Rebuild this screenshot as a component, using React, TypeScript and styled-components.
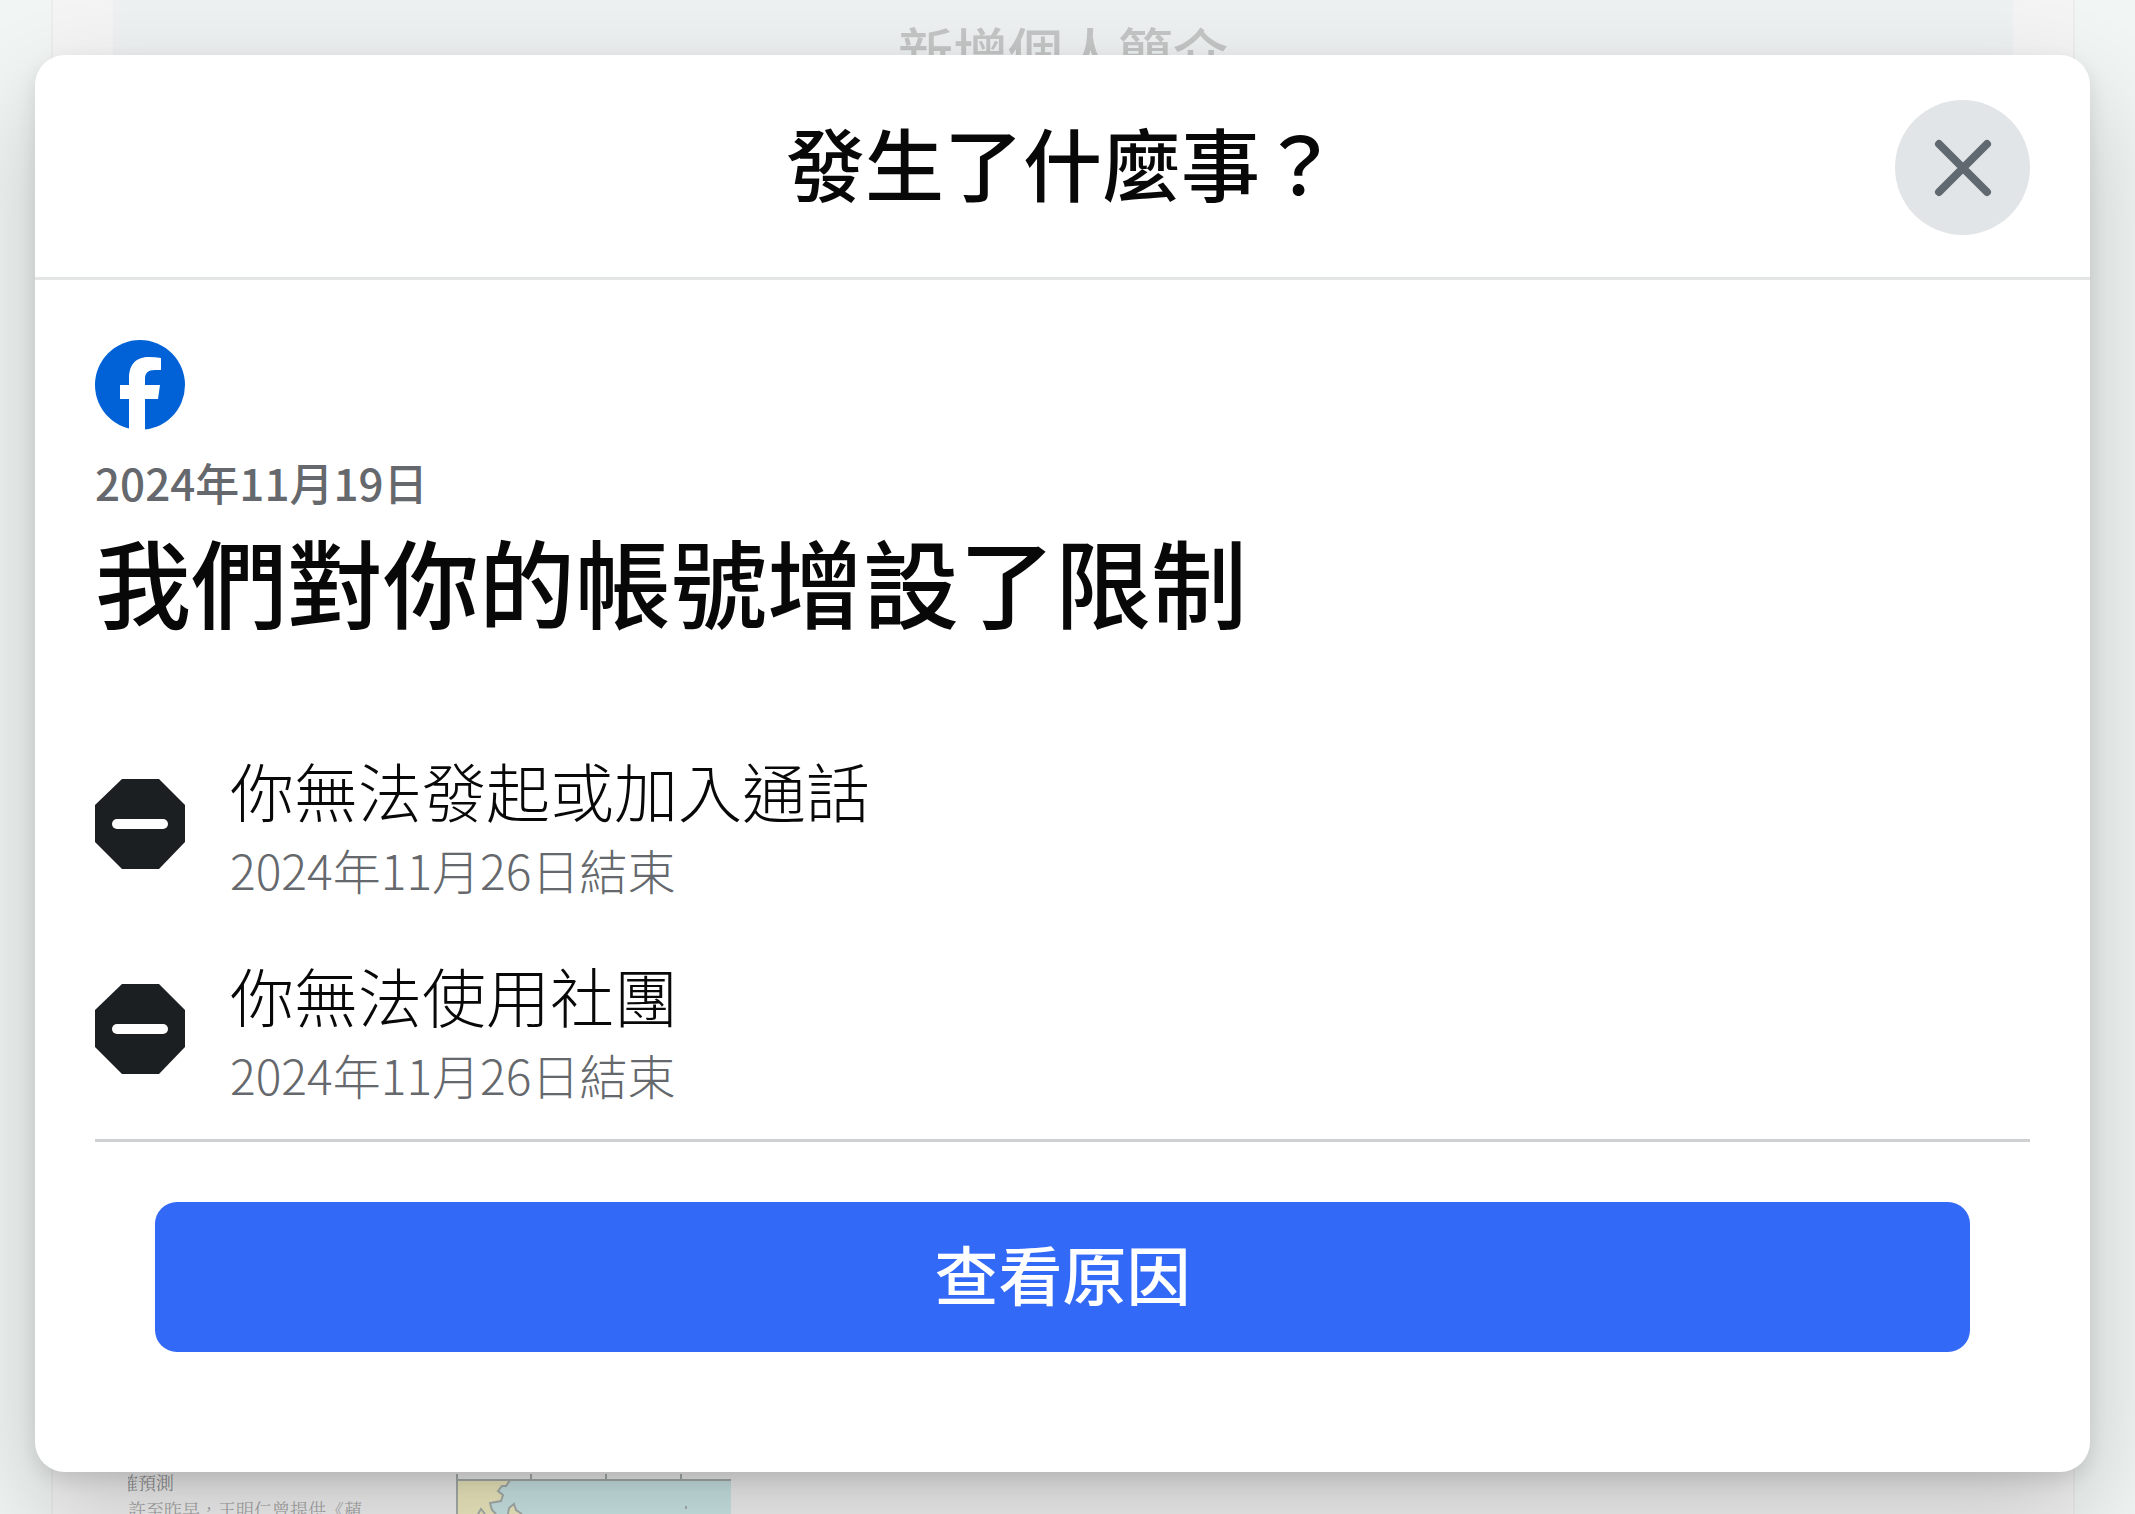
import React from 'react';
import styled, { createGlobalStyle } from 'styled-components';

const GlobalStyle = createGlobalStyle`
  *, *::before, *::after { box-sizing: border-box; }
  html, body, #root { height: 100%; }
  body {
    margin: 0;
    overflow: hidden;
    background: #f1f6f4;
    color: #080809;
    font-family: "Noto Sans CJK TC", "Noto Sans", sans-serif;
  }
  h1, h2, p, ul { margin: 0; padding: 0; }
`;

const Screen = styled.div`
  position: relative;
  height: 100%;
  overflow: hidden;
`;

const Backdrop = styled.div`
  height: 100%;
  margin: 0 60px 0 51px;
  padding: 0 60px;
  display: flex;
  flex-direction: column;
  justify-content: space-between;
  background: #f4f4f4;
  border: solid #ececec;
  border-width: 0 2px;
`;

const BioButton = styled.button`
  height: 110px;
  padding: 0 0 10px;
  border: 0;
  background: #edf1f1;
  color: #c4c6c6;
  font: 500 55px/80px "Noto Sans CJK TC", sans-serif;
`;

const Post = styled.article`
  display: flex;
  gap: 10px;
  height: 48px;
  padding-left: 15px;
`;

const Snippet = styled.div`
  width: 318px;
  height: 48px;
  padding-top: 3px;
  overflow: hidden;
  white-space: nowrap;
  font: 300 18px/27px "Noto Serif CJK TC", "Noto Sans CJK TC", serif;
  color: #a2a2a2;
`;

const SnippetLead = styled.p`
  text-indent: -8px;
  color: #8c8c8c;
`;

const MapArt = styled.svg`
  display: block;
  width: 286px;
  height: 48px;
`;

const Layer = styled.div`
  position: absolute;
  inset: 0;
  padding: 55px 45px 42px 35px;
`;

const Dialog = styled.section`
  height: 100%;
  display: flex;
  flex-direction: column;
  border-radius: 30px;
  background: #fff;
  box-shadow: 0 45px 105px rgba(0, 0, 0, 0.2), 0 8px 19px rgba(0, 0, 0, 0.1);
`;

const Header = styled.header`
  display: grid;
  grid-template-columns: 135px 1fr 135px;
  padding: 45px 60px 42px;
  border-bottom: 3px solid #e4e5e5;
`;

const Title = styled.h1`
  grid-column: 2;
  text-align: center;
  font-size: 79px;
  line-height: 124px;
  font-weight: 500;
`;

const CloseButton = styled.button`
  display: grid;
  place-items: center;
  width: 135px;
  height: 135px;
  padding: 0;
  border: 0;
  border-radius: 50%;
  background: #e2e5e7;
  color: #606970;
  cursor: pointer;
`;

const Content = styled.div`
  padding: 60px 60px 0;
`;

const Logo = styled.svg`
  display: block;
  width: 90px;
  height: 90px;
`;

const NoticeDate = styled.p`
  margin-top: 22px;
  font-size: 44px;
  line-height: 60px;
  font-weight: 500;
  color: #65686c;
`;

const Heading = styled.h2`
  margin-top: 8px;
  font-size: 96px;
  line-height: 120px;
  font-weight: 500;
`;

const Limits = styled.ul`
  display: grid;
  gap: 45px;
  margin-top: 104px;
  padding-bottom: 30px;
  border-bottom: 3px solid #ced0d2;
  list-style: none;
`;

const Limit = styled.li`
  display: flex;
  align-items: center;
  gap: 45px;
`;

const LimitTitle = styled.p`
  font-size: 64px;
  line-height: 90px;
  font-weight: 300;
`;

const LimitEnd = styled.p`
  font-size: 48px;
  line-height: 70px;
  font-weight: 300;
  color: #65686c;
`;

const Footer = styled.footer`
  display: flex;
  padding: 60px 120px;
`;

const PrimaryButton = styled.button`
  flex: 1;
  height: 150px;
  padding: 0 0 10px;
  border: 0;
  border-radius: 22px;
  background: #3369f7;
  color: #fff;
  font: 500 64px/90px "Noto Sans CJK TC", sans-serif;
  cursor: pointer;
`;

const limits = [
  { title: '你無法發起或加入通話', end: '2024年11月26日結束' },
  { title: '你無法使用社團', end: '2024年11月26日結束' },
];

const StopIcon = () => (
  <svg width="90" height="90" viewBox="0 0 90 90" aria-hidden="true">
    <path d="M27 0H64L90 26V63L64 90H27L0 63V26Z" fill="#1c1f21" />
    <rect x="17" y="40" width="56" height="10" rx="5" fill="#fff" />
  </svg>
);

export default function App() {
  return (
    <Screen>
      <GlobalStyle />
      <Backdrop aria-hidden="true">
        <BioButton tabIndex={-1}>新增個人簡介</BioButton>
        <Post>
          <Snippet>
            <SnippetLead>確預測</SnippetLead>
            <p>許至昨早，王明仁曾提供《蘋</p>
          </Snippet>
          <MapArt viewBox="0 0 286 48">
            <rect y="14" width="275" height="34" fill="#cfeaea" />
            <path d="M0 14H54L50 20 46 20 42 25 47 29 45 35 34 37 36 44 40 48H0Z" fill="#f3efc4" />
            <path d="M52 48L53 42 58 38 60 44 66 48Z" fill="#f3efc4" />
            <path
              d="M54 14L50 20 46 20 42 25 47 29 45 35 34 37 36 44 40 48M52 48L53 42 58 38 60 44 66 48M22 48L25 43 29 48M1 48V8M0 14H275M75 8V14M150 8V14M225 8V14"
              fill="none"
              stroke="#a9b1af"
              strokeWidth="2"
            />
            <path d="M230 40V43" stroke="#a9b1af" strokeWidth="2" />
          </MapArt>
        </Post>
      </Backdrop>
      <Layer>
        <Dialog role="dialog" aria-modal="true" aria-labelledby="dialog-title">
          <Header>
            <Title id="dialog-title">發生了什麼事？</Title>
            <CloseButton aria-label="關閉">
              <svg width="60" height="60" viewBox="0 0 60 60" fill="none" stroke="currentColor" strokeWidth="8" strokeLinecap="round">
                <path d="M6 6L54 54M54 6L6 54" />
              </svg>
            </CloseButton>
          </Header>
          <Content>
            <Logo viewBox="0 0 90 90" aria-label="Facebook" role="img">
              <circle cx="45" cy="45" r="45" fill="#0062d6" />
              <path d="M34 91V59H25V45H34V39C34 23 42 17 54 17Q60 17 66 18V30H60C53 30 50 33 50 39V45H65L63 59H50V91Z" fill="#fff" />
            </Logo>
            <NoticeDate>2024年11月19日</NoticeDate>
            <Heading>我們對你的帳號增設了限制</Heading>
            <Limits>
              {limits.map((limit) => (
                <Limit key={limit.title}>
                  <StopIcon />
                  <div>
                    <LimitTitle>{limit.title}</LimitTitle>
                    <LimitEnd>{limit.end}</LimitEnd>
                  </div>
                </Limit>
              ))}
            </Limits>
          </Content>
          <Footer>
            <PrimaryButton>查看原因</PrimaryButton>
          </Footer>
        </Dialog>
      </Layer>
    </Screen>
  );
}
